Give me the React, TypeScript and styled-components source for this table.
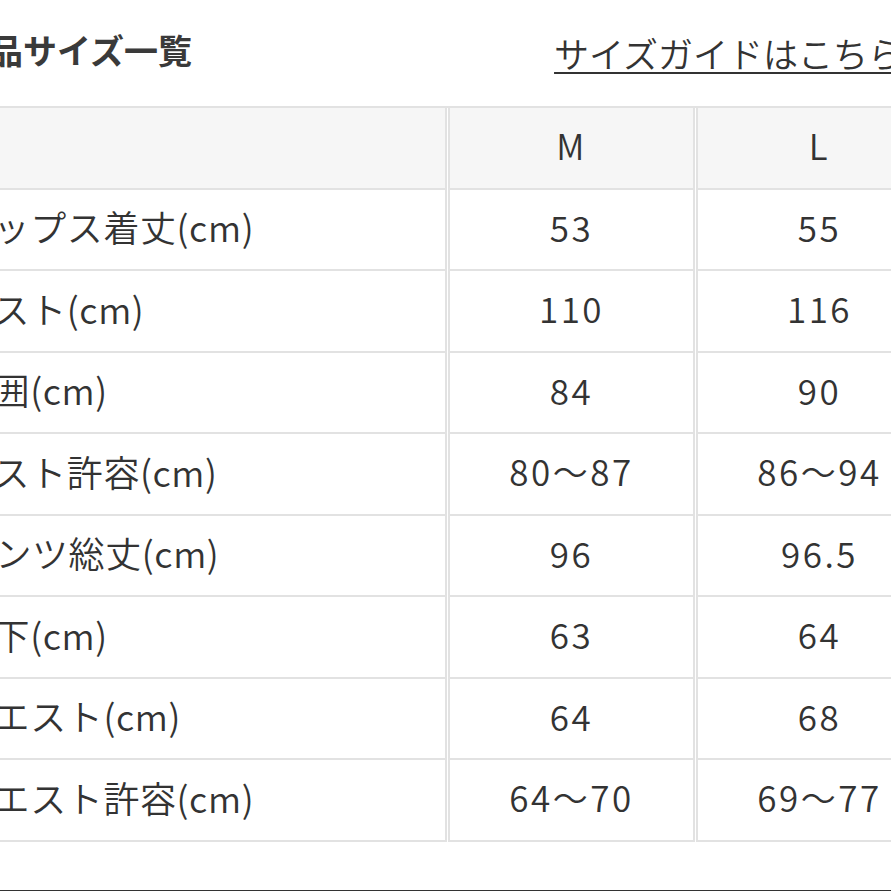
import React from "react";
import styled, { createGlobalStyle } from "styled-components";

const GlobalStyle = createGlobalStyle`
  html, body {
    margin: 0;
    padding: 0;
    background: #ffffff;
    overflow: hidden;
  }
  body {
    font-family: "Noto Sans CJK JP", "Noto Sans", sans-serif;
    color: #333333;
  }
`;

const Page = styled.div`
  margin-left: -50px;
  width: 993px;
`;

const TitleBar = styled.div`
  display: flex;
  justify-content: space-between;
  align-items: center;
  height: 106px;
  padding: 0 40px 0 5px;
  box-sizing: border-box;
`;

const Title = styled.h2`
  margin: 0 0 6px 0;
  font-size: 34px;
  font-weight: 700;
  color: #3a3a3a;
  line-height: 1;
`;

const GuideLink = styled.a`
  margin-bottom: 2px;
  font-size: 35px;
  font-weight: 350;
  line-height: 1;
  color: #333333;
  text-decoration: underline;
  text-decoration-thickness: 2px;
  text-underline-offset: 4px;
  cursor: pointer;
`;

const Grid = styled.div`
  display: grid;
  grid-template-columns: 497px 247px 247px;
  grid-auto-rows: 81.5px;
  column-gap: 1px;
  border-top: 2px solid #e2e2e2;
`;

const Cell = styled.div<{ $head?: boolean; $label?: boolean }>`
  display: flex;
  align-items: center;
  justify-content: ${(p) => (p.$label ? "flex-start" : "center")};
  padding: 0 0 6px ${(p) => (p.$label ? "5px" : "0")};
  box-sizing: border-box;
  background: ${(p) => (p.$head ? "#f6f6f6" : "#ffffff")};
  border-left: 2px solid #e2e2e2;
  border-right: 2px solid #e2e2e2;
  border-bottom: 2px solid #e2e2e2;
  font-size: ${(p) => (p.$label ? "36px" : "35px")};
  font-weight: 350;
  color: #333333;
  white-space: nowrap;
  letter-spacing: ${(p) => (p.$label ? "0.6px" : "2.5px")};
`;

const Divider = styled.div`
  margin-top: 48px;
  border-top: 3px solid #333333;
`;

const rows: [string, string, string][] = [
  ["トップス着丈(cm)", "53", "55"],
  ["バスト(cm)", "110", "116"],
  ["裾囲(cm)", "84", "90"],
  ["バスト許容(cm)", "80〜87", "86〜94"],
  ["パンツ総丈(cm)", "96", "96.5"],
  ["股下(cm)", "63", "64"],
  ["ウエスト(cm)", "64", "68"],
  ["ウエスト許容(cm)", "64〜70", "69〜77"],
];

export default function App() {
  return (
    <>
      <GlobalStyle />
      <Page>
        <TitleBar>
          <Title>商品サイズ一覧</Title>
          <GuideLink>サイズガイドはこちら</GuideLink>
        </TitleBar>
        <Grid>
          <Cell $head $label />
          <Cell $head>M</Cell>
          <Cell $head>L</Cell>
          {rows.map(([label, m, l]) => (
            <React.Fragment key={label}>
              <Cell $label>{label}</Cell>
              <Cell>{m}</Cell>
              <Cell>{l}</Cell>
            </React.Fragment>
          ))}
        </Grid>
        <Divider />
      </Page>
    </>
  );
}
